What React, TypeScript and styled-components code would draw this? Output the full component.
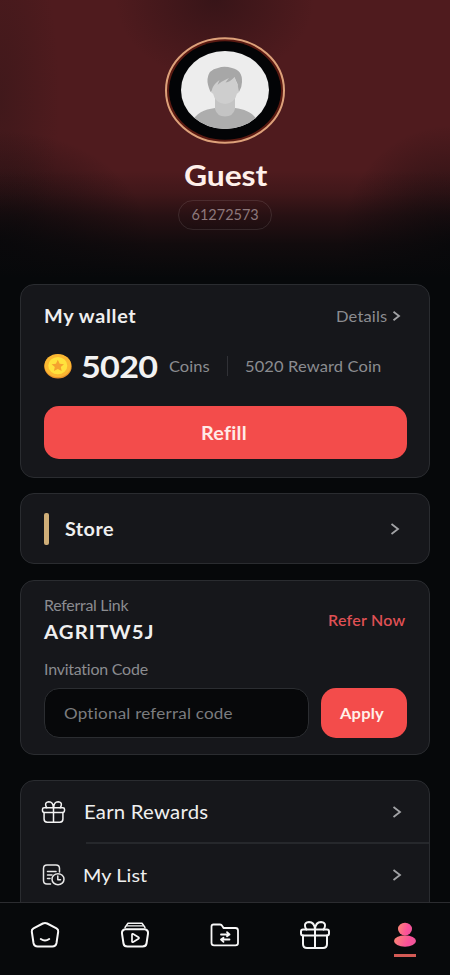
import React from "react";
import styled, { createGlobalStyle } from "styled-components";

const GlobalStyle = createGlobalStyle`
  * { box-sizing: border-box; }
  body { margin: 0; background: #06080a; font-family: Lato, "Liberation Sans", sans-serif; }
`;

const Screen = styled.div`
  width: 450px;
  height: 975px;
  display: flex;
  flex-direction: column;
  overflow: hidden;
  background: #06080a;
`;

const Content = styled.main`
  flex: 1;
  min-height: 0;
  overflow: hidden;
`;

const Profile = styled.header`
  height: 284px;
  padding-top: 37px;
  display: flex;
  flex-direction: column;
  align-items: center;
  background:
    linear-gradient(180deg, rgba(6, 8, 10, 0) 60%, rgba(6, 8, 10, 0.2) 68%, rgba(6, 8, 10, 0.55) 76%, rgba(6, 8, 10, 0.84) 86%, #06080a 98%),
    radial-gradient(ellipse 100px 80px at 215px 0, rgba(40, 16, 20, 0.6), rgba(40, 16, 20, 0)),
    radial-gradient(ellipse 150px 110px at 0 240px, rgba(6, 8, 10, 0.75), rgba(6, 8, 10, 0)),
    radial-gradient(ellipse 110px 120px at 450px 245px, rgba(6, 8, 10, 0.7), rgba(6, 8, 10, 0)),
    radial-gradient(ellipse 60px 200px at 0 100px, rgba(50, 22, 24, 0.5), rgba(50, 22, 24, 0)),
    #4f1b1e;
`;

/* Wide geometric lettering: a horizontal stretch over a known ink width. */
const Label = styled.span<{
  $size: number;
  $width: number;
  $track?: number;
  $color?: string;
  $weight?: number;
  $stretch?: number;
}>`
  display: block;
  flex: none;
  width: ${(p) => p.$width}px;
  line-height: 24px;
  white-space: nowrap;
  font-size: ${(p) => p.$size}px;
  font-weight: ${(p) => p.$weight ?? 400};
  letter-spacing: ${(p) => p.$track ?? 0}px;
  font-variant-ligatures: none;
  text-align: left;
  color: ${(p) => p.$color ?? "#efefef"};
  transform: scaleX(${(p) => p.$stretch ?? 1.1});
  transform-origin: left center;
`;

const IdPill = styled.div`
  width: 94px;
  height: 30px;
  margin-top: 13px;
  display: flex;
  align-items: center;
  justify-content: center;
  border: 1px solid rgba(255, 255, 255, 0.1);
  border-radius: 15px;
`;

const NameRow = styled.div`
  height: 24px;
  margin-top: 18px;
`;

const Card = styled.section<{ $height: number; $gap?: number }>`
  height: ${(p) => p.$height}px;
  margin: 0 20px ${(p) => p.$gap ?? 16}px;
  padding: 0 22.5px;
  border: 1px solid #2a2c30;
  border-radius: 14px;
  background: #16171b;
`;

const Row = styled.div<{ $height: number; $top?: number }>`
  height: ${(p) => p.$height}px;
  margin-top: ${(p) => p.$top ?? 0}px;
  display: flex;
  align-items: center;
`;

const Push = styled.div<{ $inset?: number; $top?: number }>`
  margin-left: auto;
  padding-right: ${(p) => p.$inset ?? 0}px;
  padding-top: ${(p) => p.$top ?? 0}px;
  display: flex;
  align-items: center;
`;

const Coin = styled.svg`
  flex: none;
  margin-right: 9px;
`;

const Separator = styled.i`
  width: 1px;
  height: 20px;
  margin: 0 17px;
  background: #303136;
`;

const Button = styled.button<{ $width: number; $height: number }>`
  width: ${(p) => p.$width}px;
  height: ${(p) => p.$height}px;
  padding: 0 2px 0 0;
  display: flex;
  align-items: center;
  justify-content: center;
  border: 0;
  border-radius: 15px;
  background: #f34c4b;
  font-family: inherit;
`;

const Accent = styled.i`
  width: 5px;
  height: 32px;
  margin-right: 16.5px;
  border-radius: 2px;
  background: #cfae78;
`;

const Stack = styled.div`
  display: flex;
  flex-direction: column;
  gap: 2px;
`;

const CodeField = styled.div`
  width: 265px;
  height: 50px;
  padding-left: 19px;
  margin-right: 12px;
  display: flex;
  align-items: center;
  border: 1px solid #2b2d31;
  border-radius: 15px;
  background: #07080a;
`;

const Menu = styled.section`
  height: 190px;
  margin: 25px 20px 0;
  border: 1px solid #2a2c30;
  border-radius: 14px;
  background: #16171b;
`;

const MenuItem = styled.div`
  height: 62px;
  padding: 0 27px 0 20px;
  display: flex;
  align-items: center;
  gap: 18px;
`;

const MenuRule = styled.hr`
  height: 2px;
  margin: -1px 0 0 65px;
  border: 0;
  background: #26282c;
`;

const Nav = styled.nav`
  height: 73px;
  flex: none;
  display: grid;
  grid-template-columns: repeat(5, 1fr);
  border-top: 1px solid #2b2c30;
  background: #07090b;
`;

const NavItem = styled.div`
  padding-top: 16px;
  display: flex;
  flex-direction: column;
  align-items: center;
`;

const ActiveLine = styled.i`
  width: 22px;
  height: 2.5px;
  margin-top: 3px;
  background: #d35a55;
`;

function Avatar() {
  return (
    <svg width="122" height="108" viewBox="0 0 122 108">
      <defs>
        <clipPath id="photo">
          <ellipse cx="61" cy="53" rx="44" ry="39" />
        </clipPath>
      </defs>
      <ellipse cx="61" cy="53.5" rx="59" ry="52.3" fill="#5a1a12" stroke="#dda17a" strokeWidth="2" />
      <ellipse cx="61" cy="53.5" rx="56" ry="49.3" fill="#030406" />
      <g clipPath="url(#photo)">
        <rect x="15" y="12" width="92" height="84" fill="#ededed" />
        <path d="M27 86C32 76 40 72.500 51 71Q61 83 71 71C82 72.500 90 76 95 86V96H27Z" fill="#adadad" />
        <path d="M51 60V72Q53 79.500 61 79.500Q69 79.500 71 72V60Z" fill="#c4c4c4" />
        <path d="M47.500 49Q46 50 46.700 53Q47.500 57 49 56.500Q51 66 61 67Q71 66 73 56.500Q75 56.500 75.300 52Q75.500 50 74 49L70 39H53Z" fill="#cecece" />
        <path d="M46.500 55Q43 47 43.500 42Q44.500 32.500 54 31Q60 28.500 68 31Q78.500 33 78 45Q78 50 75 55L73.500 47Q72 44 70.500 40Q66 45 61.500 45.500L65 41Q56 45 53.500 48L55.500 43Q50 47 48.500 51Q48 54 46.500 55Z" fill="#a7a7a7" />
      </g>
    </svg>
  );
}

function Chevron({ small = false }: { small?: boolean }) {
  return (
    <svg width="10" height="14" viewBox="0 0 10 14" fill="none" stroke="#a2a3a6" strokeWidth="1.8">
      <path d={small ? "M1.500 2.800L7 7L1.500 11.200" : "M1.500 2L8 7L1.500 12"} />
    </svg>
  );
}

function GiftIcon({ width, height, stroke }: { width: number; height: number; stroke: number }) {
  return (
    <svg width={width} height={height} viewBox="0 0 30 28" fill="none" stroke="#f4f4f4" strokeWidth={stroke} strokeLinecap="round" strokeLinejoin="round">
      <rect x="1" y="8.500" width="28" height="6" rx="2" />
      <path d="M3 14.500V23Q3 27 7 27H23Q27 27 27 23V14.500M15 5V27" />
      <path d="M15 8.500Q14.500 1 9 1Q4.500 1.500 5 5Q5.200 7 6.500 8.500M15 8.500Q15.500 1 21 1Q25.500 1.500 25 5Q24.800 7 23.500 8.500" />
    </svg>
  );
}

function ListIcon() {
  return (
    <svg width="24" height="22" viewBox="-1 0 24 22" fill="none" stroke="#e8e8e8" strokeWidth="1.5" strokeLinecap="round" strokeLinejoin="round">
      <path d="M8.500 20H5Q1.500 20 1.500 16.500V4.500Q1.500 1 5 1H14Q17.500 1 17.500 4.500V8" />
      <path d="M5.500 7.500H14M5.500 11H10M5.500 14.500H8" />
      <ellipse cx="16" cy="15.200" rx="6" ry="5.500" />
      <path d="M15.800 12V15.700H18.500" />
    </svg>
  );
}

const navStroke = { fill: "none", stroke: "#f8f8f8", strokeWidth: 2, strokeLinecap: "round", strokeLinejoin: "round" } as const;

function HomeIcon() {
  return (
    <svg width="30" height="32" viewBox="0 0 30 32" {...navStroke}>
      <path d="M12.800 4.500Q15 3.400 17.200 4.500L26.500 9.400Q28.500 10.600 28.200 12.600L26.500 24Q25.800 27.500 22.300 27.500H7.700Q4.200 27.500 3.500 24L1.800 12.600Q1.500 10.600 3.500 9.400Z" />
      <path d="M10.800 20Q15 22.800 19.200 20" />
    </svg>
  );
}

function VideosIcon() {
  return (
    <svg width="30" height="32" viewBox="0 0 30 32" {...navStroke}>
      <path d="M5 10.200H25Q28.500 11.200 28 14.700L26.500 24.500Q26 27.500 22.500 27.500H7.500Q4 27.500 3.500 24.500L2 14.700Q1.500 11.200 5 10.200Z" />
      <path d="M5 8.500L8 4.200H22L25 8.500" strokeWidth="1.500" />
      <path d="M7.500 6.900H22.500" strokeWidth="1.300" />
      <path d="M12 15.500V22.500Q12.200 23.500 13.200 23L18.500 19.700Q19.500 19 18.500 18.200L13.200 15Q12.200 14.500 12 15.500Z" strokeWidth="1.700" />
    </svg>
  );
}

function FolderIcon() {
  return (
    <svg width="30" height="32" viewBox="0 0 30 32" {...navStroke}>
      <path d="M3.500 5.500H10Q11.500 5.500 12.300 7L13.500 9H25.500Q28 9 28 11.500V24Q28 26.300 25.500 26.300H4Q1.500 26.300 1.500 24V7.500Q1.500 5.500 3.500 5.500Z" strokeWidth="1.800" />
      <path d="M11 15.500H19.500M17 13.200L19.500 15.500L17 17.200M19.500 20.500H11M13.500 18.700L11 20.500L13.500 22.800" strokeWidth="1.800" />
    </svg>
  );
}

function ProfileIcon() {
  return (
    <svg width="24" height="32" viewBox="0 0 24 32">
      <defs>
        <linearGradient id="person" x1="0" y1="0" x2="1" y2="0.25">
          <stop offset="0" stopColor="#fb8a70" />
          <stop offset="0.75" stopColor="#fb509b" />
          <stop offset="1" stopColor="#ee5598" />
        </linearGradient>
      </defs>
      <ellipse cx="12" cy="10" rx="7" ry="6.300" fill="url(#person)" />
      <ellipse cx="12" cy="22" rx="11" ry="5.700" fill="url(#person)" />
    </svg>
  );
}

function CoinIcon() {
  return (
    <Coin width="28" height="26" viewBox="0 0 28 26">
      <ellipse cx="14" cy="13.500" rx="13.700" ry="12" fill="#e9922b" />
      <ellipse cx="13.800" cy="12.500" rx="13.300" ry="11.600" fill="#fbb832" />
      <ellipse cx="13.800" cy="12.700" rx="9.500" ry="8.600" fill="#ffe23d" />
      <path d="M13.800 6.800L15.700 10.700L20 11.200L16.800 14L17.700 18L13.800 16L9.900 18L10.800 14L7.600 11.200L11.900 10.700Z" fill="#f5a32f" />
    </Coin>
  );
}

const grey = "#8b8c90";

export default function App() {
  return (
    <>
      <GlobalStyle />
      <Screen>
        <Content>
          <Profile>
            <Avatar />
            <NameRow>
              <Label $size={29} $width={83} $weight={700} $track={-0.1} $color="#fff0ea">Guest</Label>
            </NameRow>
            <IdPill>
              <Label $size={14.5} $width={67} $stretch={1} $color="#8d787b">61272573</Label>
            </IdPill>
          </Profile>

          <Card $height={194} $gap={15}>
            <Row $height={24} $top={19}>
              <Label $size={18} $width={92} $weight={700} $track={0.6}>My wallet</Label>
              <Push $inset={5}>
                <Label $size={15} $width={56} $track={0.15} $color={grey}>Details</Label>
                <Chevron small />
              </Push>
            </Row>
            <Row $height={36} $top={20}>
              <CoinIcon />
              <Label $size={31} $width={88} $weight={700} $track={-0.6} $color="#f2f2f2">5020</Label>
              <Label $size={15} $width={41} $track={0} $color={grey}>Coins</Label>
              <Separator />
              <Label $size={15} $width={137} $track={0.1} $color={grey}>5020 Reward Coin</Label>
            </Row>
            <Row $height={54} $top={21.5}>
              <Button $width={363} $height={53.5}>
                <Label $size={18} $width={47} $weight={700} $track={0.2} $color="#ffeae6">Refill</Label>
              </Button>
            </Row>
          </Card>

          <Card $height={71}>
            <Row $height={69}>
              <Accent />
              <Label $size={18} $width={49} $weight={700} $track={0.4}>Store</Label>
              <Push $inset={7}>
                <Chevron />
              </Push>
            </Row>
          </Card>

          <Card $height={175} $gap={0}>
            <Row $height={54} $top={11}>
              <Stack>
                <Label $size={14.5} $width={85} $track={-0.25} $color={grey}>Referral Link</Label>
                <Label $size={18.5} $width={109} $weight={700} $track={1}>AGRITW5J</Label>
              </Stack>
              <Push $top={4}>
                <Label $size={14.5} $width={79} $weight={600} $track={0.25} $color="#df5054">Refer Now</Label>
              </Push>
            </Row>
            <Row $height={24} $top={12}>
              <Label $size={14.5} $width={104} $track={-0.2} $color={grey}>Invitation Code</Label>
            </Row>
            <Row $height={50} $top={6}>
              <CodeField>
                <Label $size={15.5} $width={170} $track={0.2} $color="#7b7c7f">Optional referral code</Label>
              </CodeField>
              <Button $width={86} $height={50}>
                <Label $size={15} $width={45} $weight={700} $track={0.15} $color="#fff0e8">Apply</Label>
              </Button>
            </Row>
          </Card>

          <Menu>
            <MenuItem>
              <GiftIcon width={25} height={22} stroke={1.9} />
              <Label $size={18.5} $width={124} $track={0.2}>Earn Rewards</Label>
              <Push><Chevron /></Push>
            </MenuItem>
            <MenuRule />
            <MenuItem>
              <ListIcon />
              <Label $size={18} $width={62} $track={0.1}>My List</Label>
              <Push><Chevron /></Push>
            </MenuItem>
          </Menu>
        </Content>

        <Nav>
          <NavItem><HomeIcon /></NavItem>
          <NavItem><VideosIcon /></NavItem>
          <NavItem><FolderIcon /></NavItem>
          <NavItem><GiftIcon width={30} height={32} stroke={2} /></NavItem>
          <NavItem><ProfileIcon /><ActiveLine /></NavItem>
        </Nav>
      </Screen>
    </>
  );
}
